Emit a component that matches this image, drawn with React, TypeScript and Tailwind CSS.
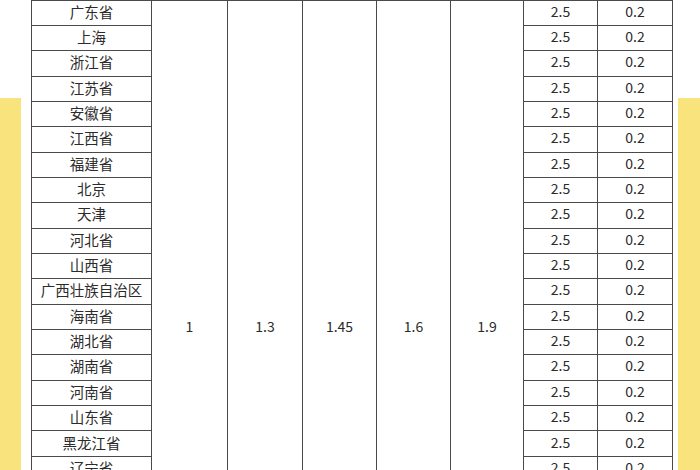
import React from "react";

const provinces = [
  "广东省", "上海", "浙江省", "江苏省", "安徽省", "江西省", "福建省", "北京", "天津",
  "河北省", "山西省", "广西壮族自治区", "海南省", "湖北省", "湖南省", "河南省", "山东省",
  "黑龙江省", "辽宁省", "吉林省", "重庆", "四川省", "贵州省", "云南省", "陕西省", "甘肃省",
];

const merged = ["1", "1.3", "1.45", "1.6", "1.9"];

export default function App() {
  return (
    <div
      className="w-[700px] h-[470px] overflow-hidden bg-white flex text-[#2b2b2b] text-[14px]"
      style={{ fontFamily: '"Noto Sans CJK SC", "Microsoft YaHei", sans-serif' }}
    >
      <div className="w-[21px] shrink-0 mt-[98px] bg-[#f9e37c]" />
      <div className="w-[10px] shrink-0" />
      <div className="w-[641px] shrink-0 -mt-[0.5px]">
        <table className="w-[641px] table-fixed border-collapse">
          <colgroup>
            <col className="w-[120px]" />
            <col className="w-[76px]" />
            <col className="w-[75px]" />
            <col className="w-[74px]" />
            <col className="w-[74px]" />
            <col className="w-[73px]" />
            <col className="w-[74px]" />
            <col className="w-[75px]" />
          </colgroup>
          <tbody>
            {provinces.map((p, i) => (
              <tr key={p} className="h-[25.35px]">
                <td className="border border-[#4a4a4a] text-center p-0 pb-[3px] leading-[21px] text-[14.5px]">{p}</td>
                {i === 0 &&
                  merged.map((m) => (
                    <td
                      key={m}
                      rowSpan={provinces.length}
                      className="border border-[#4a4a4a] text-center align-middle p-0 pb-[5px]"
                    >
                      {m}
                    </td>
                  ))}
                <td className="border border-[#4a4a4a] text-center p-0 pb-[3px] leading-[21px]">2.5</td>
                <td className="border border-[#4a4a4a] text-center p-0 pb-[3px] leading-[21px]">0.2</td>
              </tr>
            ))}
          </tbody>
        </table>
      </div>
      <div className="w-[6px] shrink-0" />
      <div className="w-[22px] shrink-0 mt-[98px] bg-[#f9e37c]" />
    </div>
  );
}
